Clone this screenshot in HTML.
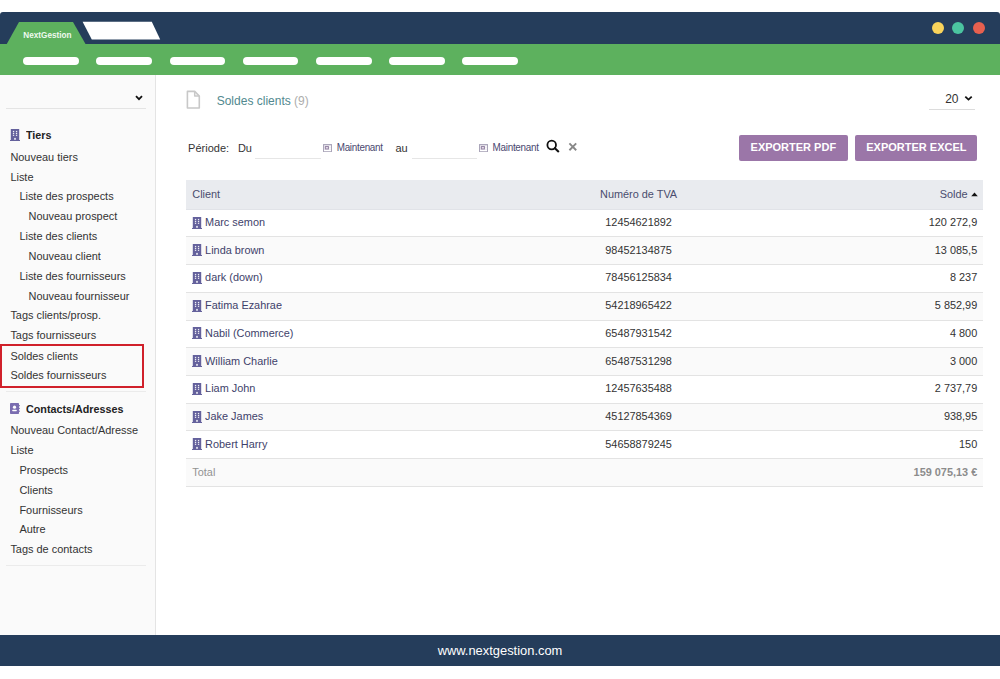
<!DOCTYPE html>
<html><head><meta charset="utf-8">
<style>
*{box-sizing:border-box;margin:0;padding:0}
html,body{width:1000px;height:679px;overflow:hidden;background:#fff}
body{position:relative;font-family:"Liberation Sans",sans-serif;color:#333;font-size:10.8px}
.abs{position:absolute}
.pill{position:absolute;top:56.5px;height:8px;width:55.5px;border-radius:4px;background:#fff}
.dot{position:absolute;top:21.5px;width:12px;height:12px;border-radius:50%}
.btn{position:absolute;top:134.7px;height:26px;background:#9b76a8;border-radius:2px;color:#fff;font-weight:bold;font-size:11px;text-align:center;line-height:24.5px}
</style></head>
<body>
<div class="abs" style="left:0;top:12px;width:1000px;height:32px;background:#253d5b;border-radius:3px 3px 0 0"></div>
<svg class="abs" style="left:0;top:0" width="200" height="50"><polygon points="6.5,44.5 19,22 73,22 85.8,44.5" fill="#5db15e"/><polygon points="82.6,21.8 151.8,21.8 160.2,39.4 91.8,39.4" fill="#fff"/></svg>
<div class="abs" style="left:23.3px;top:29.6px;font-size:8.2px;font-weight:bold;color:#eefaee;line-height:11px;white-space:nowrap">NextGestion</div>
<div class="dot" style="left:932px;background:#f9d35b"></div>
<div class="dot" style="left:952px;background:#4bc4a0"></div>
<div class="dot" style="left:973px;background:#e8604f"></div>
<div class="abs" style="left:0;top:43.5px;width:1000px;height:31.5px;background:#5db15e"></div>
<div class="pill" style="left:23.0px"></div>
<div class="pill" style="left:96.2px"></div>
<div class="pill" style="left:169.6px"></div>
<div class="pill" style="left:242.8px"></div>
<div class="pill" style="left:316.0px"></div>
<div class="pill" style="left:389.2px"></div>
<div class="pill" style="left:462.4px"></div>
<div class="abs" style="left:0;top:75px;width:156px;height:560px;background:#fafafa;border-right:1px solid #e4e4e4"></div>
<div class="abs" style="left:26.00px;top:127.98px;font-size:10.75px;line-height:14px;color:#222;white-space:nowrap;transform:scaleY(1.060);transform-origin:0 10.72px;font-weight:bold">Tiers</div>
<div class="abs" style="left:10.40px;top:150.21px;font-size:10.95px;line-height:14px;color:#333;white-space:nowrap;transform:scaleY(1.060);transform-origin:0 10.79px;">Nouveau tiers</div>
<div class="abs" style="left:10.40px;top:169.51px;font-size:10.95px;line-height:14px;color:#333;white-space:nowrap;transform:scaleY(1.060);transform-origin:0 10.79px;">Liste</div>
<div class="abs" style="left:19.40px;top:189.41px;font-size:10.95px;line-height:14px;color:#333;white-space:nowrap;transform:scaleY(1.060);transform-origin:0 10.79px;">Liste des prospects</div>
<div class="abs" style="left:28.50px;top:209.21px;font-size:10.95px;line-height:14px;color:#333;white-space:nowrap;transform:scaleY(1.060);transform-origin:0 10.79px;">Nouveau prospect</div>
<div class="abs" style="left:19.40px;top:229.21px;font-size:10.95px;line-height:14px;color:#333;white-space:nowrap;transform:scaleY(1.060);transform-origin:0 10.79px;">Liste des clients</div>
<div class="abs" style="left:28.50px;top:249.21px;font-size:10.95px;line-height:14px;color:#333;white-space:nowrap;transform:scaleY(1.060);transform-origin:0 10.79px;">Nouveau client</div>
<div class="abs" style="left:19.40px;top:269.11px;font-size:10.95px;line-height:14px;color:#333;white-space:nowrap;transform:scaleY(1.060);transform-origin:0 10.79px;">Liste des fournisseurs</div>
<div class="abs" style="left:28.50px;top:288.91px;font-size:10.95px;line-height:14px;color:#333;white-space:nowrap;transform:scaleY(1.060);transform-origin:0 10.79px;">Nouveau fournisseur</div>
<div class="abs" style="left:10.40px;top:308.21px;font-size:10.95px;line-height:14px;color:#333;white-space:nowrap;transform:scaleY(1.060);transform-origin:0 10.79px;">Tags clients/prosp.</div>
<div class="abs" style="left:10.40px;top:328.41px;font-size:10.95px;line-height:14px;color:#333;white-space:nowrap;transform:scaleY(1.060);transform-origin:0 10.79px;">Tags fournisseurs</div>
<div class="abs" style="left:10.40px;top:348.91px;font-size:10.95px;line-height:14px;color:#333;white-space:nowrap;transform:scaleY(1.060);transform-origin:0 10.79px;">Soldes clients</div>
<div class="abs" style="left:10.40px;top:368.31px;font-size:10.95px;line-height:14px;color:#333;white-space:nowrap;transform:scaleY(1.060);transform-origin:0 10.79px;">Soldes fournisseurs</div>
<div class="abs" style="left:26.00px;top:401.58px;font-size:10.75px;line-height:14px;color:#222;white-space:nowrap;transform:scaleY(1.060);transform-origin:0 10.72px;font-weight:bold">Contacts/Adresses</div>
<div class="abs" style="left:10.40px;top:422.81px;font-size:10.95px;line-height:14px;color:#333;white-space:nowrap;transform:scaleY(1.060);transform-origin:0 10.79px;">Nouveau Contact/Adresse</div>
<div class="abs" style="left:10.40px;top:442.71px;font-size:10.95px;line-height:14px;color:#333;white-space:nowrap;transform:scaleY(1.060);transform-origin:0 10.79px;">Liste</div>
<div class="abs" style="left:19.40px;top:463.01px;font-size:10.95px;line-height:14px;color:#333;white-space:nowrap;transform:scaleY(1.060);transform-origin:0 10.79px;">Prospects</div>
<div class="abs" style="left:19.40px;top:482.91px;font-size:10.95px;line-height:14px;color:#333;white-space:nowrap;transform:scaleY(1.060);transform-origin:0 10.79px;">Clients</div>
<div class="abs" style="left:19.40px;top:502.81px;font-size:10.95px;line-height:14px;color:#333;white-space:nowrap;transform:scaleY(1.060);transform-origin:0 10.79px;">Fournisseurs</div>
<div class="abs" style="left:19.40px;top:522.31px;font-size:10.95px;line-height:14px;color:#333;white-space:nowrap;transform:scaleY(1.060);transform-origin:0 10.79px;">Autre</div>
<div class="abs" style="left:10.40px;top:542.11px;font-size:10.95px;line-height:14px;color:#333;white-space:nowrap;transform:scaleY(1.060);transform-origin:0 10.79px;">Tags de contacts</div>
<div class="abs" style="left:10px;top:128.9px;width:10px;height:12px"><svg width="10" height="12" viewBox="0 0 10 12" style="position:absolute;left:0;top:0"><path d="M0.8 0h8.4v11h0.8v1H0v-1h0.8z" fill="#64619c"/><g fill="#fff" opacity=".9"><rect x="2.9" y="1.9" width="1.3" height="1.2"/><rect x="5.9" y="1.9" width="1.3" height="1.2"/><rect x="2.9" y="3.8" width="1.3" height="1.2"/><rect x="5.9" y="3.8" width="1.3" height="1.2"/><rect x="2.9" y="5.7" width="1.3" height="1.2"/><rect x="5.9" y="5.7" width="1.3" height="1.2"/><rect x="4.2" y="8.9" width="1.6" height="1.9"/></g></svg></div>
<div class="abs" style="left:10px;top:403px;width:10px;height:11px"><svg width="10" height="11" viewBox="0 0 10 11" style="position:absolute;left:0;top:0"><rect x="0" y="0" width="9" height="11" rx="0.8" fill="#7a6db0"/><rect x="9" y="2" width="0.8" height="1.3" fill="#7a6db0"/><rect x="9" y="4.8" width="0.8" height="1.3" fill="#7a6db0"/><rect x="9" y="7.6" width="0.8" height="1.3" fill="#7a6db0"/><circle cx="4.5" cy="4.2" r="1.6" fill="#fff"/><rect x="2.2" y="6.7" width="4.6" height="1.5" rx=".6" fill="#fff"/></svg></div>
<div class="abs" style="left:5.5px;top:107.5px;width:140px;height:1px;background:#e4e4e4"></div>
<svg class="abs" style="left:135.4px;top:94.8px" width="8" height="6" viewBox="0 0 8 6"><path d="M1 1.2 L4 4.2 L7 1.2" stroke="#111" stroke-width="1.8" fill="none"/></svg>
<div class="abs" style="left:0;top:344.3px;width:144px;height:43.7px;border:2px solid #d0202a"></div>
<div class="abs" style="left:5.6px;top:391.3px;width:140px;height:1px;background:#ebebeb"></div>
<div class="abs" style="left:6px;top:564.5px;width:140px;height:1px;background:#ebebeb"></div>
<svg class="abs" style="left:185.8px;top:90px" width="16" height="20" viewBox="0 0 16 20"><path d="M1.4 1.4 H8.7 L13.3 6.1 V18 H1.4 Z" fill="none" stroke="#c8c8c8" stroke-width="1.6" stroke-linejoin="round"/><path d="M8.7 1.4 V6.1 H13.3" fill="none" stroke="#c8c8c8" stroke-width="1.5" stroke-linejoin="round"/></svg>
<div class="abs" style="left:216.70px;top:93.54px;font-size:12.00px;line-height:14px;color:#52898f;white-space:nowrap;transform:scaleY(1.060);transform-origin:0 11.16px;">Soldes clients <span style="color:#adadad">(9)</span></div>
<div class="abs" style="left:945.20px;top:91.74px;font-size:12.00px;line-height:14px;color:#333;white-space:nowrap;transform:scaleY(1.060);transform-origin:0 11.16px;transform:scaleY(1.1)">20</div>
<svg class="abs" style="left:964px;top:94.5px" width="9" height="7" viewBox="0 0 9 7"><path d="M1.3 1.6 L4.5 4.6 L7.7 1.6" stroke="#111" stroke-width="1.8" fill="none"/></svg>
<div class="abs" style="left:929px;top:109px;width:46px;height:1px;background:#dcdcdc"></div>
<div class="abs" style="left:188.10px;top:140.59px;font-size:11.00px;line-height:14px;color:#333;white-space:nowrap;transform:scaleY(1.060);transform-origin:0 10.81px;">Période:</div>
<div class="abs" style="left:237.90px;top:140.59px;font-size:11.00px;line-height:14px;color:#333;white-space:nowrap;transform:scaleY(1.060);transform-origin:0 10.81px;">Du</div>
<div class="abs" style="left:255px;top:158px;width:66px;height:1px;background:#e6e6e6"></div>
<svg class="abs" style="left:323.1px;top:143.7px" width="9" height="8.2" viewBox="0 0 9 8.2"><rect x="0.5" y="0.6" width="8" height="7.1" fill="none" stroke="#aaa5b9" stroke-width="1"/><rect x="0.5" y="0.4" width="8" height="0.9" fill="#aaa5b9"/><path d="M1 3.2H8M1 5.2H8" stroke="#ddd8e6" stroke-width=".6"/><rect x="2.3" y="2.6" width="3.1" height="2.4" fill="#efe6f2" stroke="#8f7f9f" stroke-width="1"/></svg>
<div class="abs" style="left:336.70px;top:140.97px;font-size:9.90px;line-height:14px;color:#4a4870;white-space:nowrap;transform:scaleY(1.060);transform-origin:0 10.43px;letter-spacing:-0.28px">Maintenant</div>
<div class="abs" style="left:395.40px;top:140.59px;font-size:11.00px;line-height:14px;color:#333;white-space:nowrap;transform:scaleY(1.060);transform-origin:0 10.81px;">au</div>
<div class="abs" style="left:411.5px;top:158px;width:65.5px;height:1px;background:#e6e6e6"></div>
<svg class="abs" style="left:479.0px;top:143.7px" width="9" height="8.2" viewBox="0 0 9 8.2"><rect x="0.5" y="0.6" width="8" height="7.1" fill="none" stroke="#aaa5b9" stroke-width="1"/><rect x="0.5" y="0.4" width="8" height="0.9" fill="#aaa5b9"/><path d="M1 3.2H8M1 5.2H8" stroke="#ddd8e6" stroke-width=".6"/><rect x="2.3" y="2.6" width="3.1" height="2.4" fill="#efe6f2" stroke="#8f7f9f" stroke-width="1"/></svg>
<div class="abs" style="left:492.60px;top:140.97px;font-size:9.90px;line-height:14px;color:#4a4870;white-space:nowrap;transform:scaleY(1.060);transform-origin:0 10.43px;letter-spacing:-0.28px">Maintenant</div>
<svg class="abs" style="left:544px;top:138px" width="17" height="16" viewBox="0 0 17 16"><circle cx="7.7" cy="7" r="4.3" fill="none" stroke="#111" stroke-width="1.8"/><path d="M10.9 10.2 L14.3 13.4" stroke="#111" stroke-width="2.1" stroke-linecap="round"/></svg>
<svg class="abs" style="left:568px;top:141.5px" width="10" height="10" viewBox="0 0 10 10"><path d="M1.4 1.45 L8.2 8.25 M8.2 1.45 L1.4 8.25" stroke="#888" stroke-width="1.9"/></svg>
<div class="btn" style="left:739px;width:108.7px">EXPORTER PDF</div>
<div class="btn" style="left:855.3px;width:122.2px">EXPORTER EXCEL</div>
<div class="abs" style="left:186px;top:180px;width:797.2px;height:29.6px;background:#e9ebef;border-bottom:1.2px solid #e1e3e8"></div>
<div class="abs" style="left:192.30px;top:187.42px;font-size:10.90px;line-height:14px;color:#4a4d6e;white-space:nowrap;transform:scaleY(1.060);transform-origin:0 10.78px;">Client</div>
<div class="abs" style="left:638.60px;top:187.42px;width:0;font-size:10.90px;line-height:14px;white-space:nowrap;color:#4a4d6e;transform:scaleY(1.060);transform-origin:0 10.78px;"><span style="position:absolute;left:0;transform:translateX(-50%)">Numéro de TVA</span></div>
<div class="abs" style="left:939.70px;top:187.42px;font-size:10.90px;line-height:14px;color:#4a4d6e;white-space:nowrap;transform:scaleY(1.060);transform-origin:0 10.78px;">Solde</div>
<svg class="abs" style="left:970.5px;top:192px" width="7" height="5" viewBox="0 0 7 5"><path d="M0.2 4.2 L3.5 0.6 L6.8 4.2 Z" fill="#111"/></svg>
<div class="abs" style="left:186px;top:209.60px;width:797.2px;height:27.73px;background:#fff;border-bottom:1px solid #e3e3e3"></div>
<div class="abs" style="left:186px;top:237.33px;width:797.2px;height:27.73px;background:#fafafa;border-bottom:1px solid #e3e3e3"></div>
<div class="abs" style="left:186px;top:265.06px;width:797.2px;height:27.73px;background:#fff;border-bottom:1px solid #e3e3e3"></div>
<div class="abs" style="left:186px;top:292.79px;width:797.2px;height:27.73px;background:#fafafa;border-bottom:1px solid #e3e3e3"></div>
<div class="abs" style="left:186px;top:320.52px;width:797.2px;height:27.73px;background:#fff;border-bottom:1px solid #e3e3e3"></div>
<div class="abs" style="left:186px;top:348.25px;width:797.2px;height:27.73px;background:#fafafa;border-bottom:1px solid #e3e3e3"></div>
<div class="abs" style="left:186px;top:375.98px;width:797.2px;height:27.73px;background:#fff;border-bottom:1px solid #e3e3e3"></div>
<div class="abs" style="left:186px;top:403.71px;width:797.2px;height:27.73px;background:#fafafa;border-bottom:1px solid #e3e3e3"></div>
<div class="abs" style="left:186px;top:431.44px;width:797.2px;height:27.73px;background:#fff;border-bottom:1px solid #e3e3e3"></div>
<div class="abs" style="left:186px;top:459.17px;width:797.2px;height:27.73px;background:#fafafa;border-bottom:1px solid #e3e3e3"></div>
<div class="abs" style="left:192px;top:216.50px;width:10px;height:12px"><svg width="10" height="12" viewBox="0 0 10 12" style="position:absolute;left:0;top:0"><path d="M0.8 0h8.4v11h0.8v1H0v-1h0.8z" fill="#64619c"/><g fill="#fff" opacity=".9"><rect x="2.9" y="1.9" width="1.3" height="1.2"/><rect x="5.9" y="1.9" width="1.3" height="1.2"/><rect x="2.9" y="3.8" width="1.3" height="1.2"/><rect x="5.9" y="3.8" width="1.3" height="1.2"/><rect x="2.9" y="5.7" width="1.3" height="1.2"/><rect x="5.9" y="5.7" width="1.3" height="1.2"/><rect x="4.2" y="8.9" width="1.6" height="1.9"/></g></svg></div>
<div class="abs" style="left:205.10px;top:214.92px;font-size:10.90px;line-height:14px;color:#3e3f6a;white-space:nowrap;transform:scaleY(1.060);transform-origin:0 10.78px;">Marc semon</div>
<div class="abs" style="left:638.60px;top:214.92px;width:0;font-size:10.90px;line-height:14px;white-space:nowrap;color:#333;transform:scaleY(1.060);transform-origin:0 10.78px;"><span style="position:absolute;left:0;transform:translateX(-50%)">12454621892</span></div>
<div class="abs" style="right:22.80px;top:214.92px;font-size:10.90px;line-height:14px;white-space:nowrap;color:#333;text-align:right;transform:scaleY(1.060);transform-origin:0 10.78px;">120 272,9</div>
<div class="abs" style="left:192px;top:244.23px;width:10px;height:12px"><svg width="10" height="12" viewBox="0 0 10 12" style="position:absolute;left:0;top:0"><path d="M0.8 0h8.4v11h0.8v1H0v-1h0.8z" fill="#64619c"/><g fill="#fff" opacity=".9"><rect x="2.9" y="1.9" width="1.3" height="1.2"/><rect x="5.9" y="1.9" width="1.3" height="1.2"/><rect x="2.9" y="3.8" width="1.3" height="1.2"/><rect x="5.9" y="3.8" width="1.3" height="1.2"/><rect x="2.9" y="5.7" width="1.3" height="1.2"/><rect x="5.9" y="5.7" width="1.3" height="1.2"/><rect x="4.2" y="8.9" width="1.6" height="1.9"/></g></svg></div>
<div class="abs" style="left:205.10px;top:242.65px;font-size:10.90px;line-height:14px;color:#3e3f6a;white-space:nowrap;transform:scaleY(1.060);transform-origin:0 10.78px;">Linda brown</div>
<div class="abs" style="left:638.60px;top:242.65px;width:0;font-size:10.90px;line-height:14px;white-space:nowrap;color:#333;transform:scaleY(1.060);transform-origin:0 10.78px;"><span style="position:absolute;left:0;transform:translateX(-50%)">98452134875</span></div>
<div class="abs" style="right:22.80px;top:242.65px;font-size:10.90px;line-height:14px;white-space:nowrap;color:#333;text-align:right;transform:scaleY(1.060);transform-origin:0 10.78px;">13 085,5</div>
<div class="abs" style="left:192px;top:271.96px;width:10px;height:12px"><svg width="10" height="12" viewBox="0 0 10 12" style="position:absolute;left:0;top:0"><path d="M0.8 0h8.4v11h0.8v1H0v-1h0.8z" fill="#64619c"/><g fill="#fff" opacity=".9"><rect x="2.9" y="1.9" width="1.3" height="1.2"/><rect x="5.9" y="1.9" width="1.3" height="1.2"/><rect x="2.9" y="3.8" width="1.3" height="1.2"/><rect x="5.9" y="3.8" width="1.3" height="1.2"/><rect x="2.9" y="5.7" width="1.3" height="1.2"/><rect x="5.9" y="5.7" width="1.3" height="1.2"/><rect x="4.2" y="8.9" width="1.6" height="1.9"/></g></svg></div>
<div class="abs" style="left:205.10px;top:270.38px;font-size:10.90px;line-height:14px;color:#3e3f6a;white-space:nowrap;transform:scaleY(1.060);transform-origin:0 10.78px;">dark (down)</div>
<div class="abs" style="left:638.60px;top:270.38px;width:0;font-size:10.90px;line-height:14px;white-space:nowrap;color:#333;transform:scaleY(1.060);transform-origin:0 10.78px;"><span style="position:absolute;left:0;transform:translateX(-50%)">78456125834</span></div>
<div class="abs" style="right:22.80px;top:270.38px;font-size:10.90px;line-height:14px;white-space:nowrap;color:#333;text-align:right;transform:scaleY(1.060);transform-origin:0 10.78px;">8 237</div>
<div class="abs" style="left:192px;top:299.69px;width:10px;height:12px"><svg width="10" height="12" viewBox="0 0 10 12" style="position:absolute;left:0;top:0"><path d="M0.8 0h8.4v11h0.8v1H0v-1h0.8z" fill="#64619c"/><g fill="#fff" opacity=".9"><rect x="2.9" y="1.9" width="1.3" height="1.2"/><rect x="5.9" y="1.9" width="1.3" height="1.2"/><rect x="2.9" y="3.8" width="1.3" height="1.2"/><rect x="5.9" y="3.8" width="1.3" height="1.2"/><rect x="2.9" y="5.7" width="1.3" height="1.2"/><rect x="5.9" y="5.7" width="1.3" height="1.2"/><rect x="4.2" y="8.9" width="1.6" height="1.9"/></g></svg></div>
<div class="abs" style="left:205.10px;top:298.11px;font-size:10.90px;line-height:14px;color:#3e3f6a;white-space:nowrap;transform:scaleY(1.060);transform-origin:0 10.78px;">Fatima Ezahrae</div>
<div class="abs" style="left:638.60px;top:298.11px;width:0;font-size:10.90px;line-height:14px;white-space:nowrap;color:#333;transform:scaleY(1.060);transform-origin:0 10.78px;"><span style="position:absolute;left:0;transform:translateX(-50%)">54218965422</span></div>
<div class="abs" style="right:22.80px;top:298.11px;font-size:10.90px;line-height:14px;white-space:nowrap;color:#333;text-align:right;transform:scaleY(1.060);transform-origin:0 10.78px;">5 852,99</div>
<div class="abs" style="left:192px;top:327.42px;width:10px;height:12px"><svg width="10" height="12" viewBox="0 0 10 12" style="position:absolute;left:0;top:0"><path d="M0.8 0h8.4v11h0.8v1H0v-1h0.8z" fill="#64619c"/><g fill="#fff" opacity=".9"><rect x="2.9" y="1.9" width="1.3" height="1.2"/><rect x="5.9" y="1.9" width="1.3" height="1.2"/><rect x="2.9" y="3.8" width="1.3" height="1.2"/><rect x="5.9" y="3.8" width="1.3" height="1.2"/><rect x="2.9" y="5.7" width="1.3" height="1.2"/><rect x="5.9" y="5.7" width="1.3" height="1.2"/><rect x="4.2" y="8.9" width="1.6" height="1.9"/></g></svg></div>
<div class="abs" style="left:205.10px;top:325.84px;font-size:10.90px;line-height:14px;color:#3e3f6a;white-space:nowrap;transform:scaleY(1.060);transform-origin:0 10.78px;">Nabil (Commerce)</div>
<div class="abs" style="left:638.60px;top:325.84px;width:0;font-size:10.90px;line-height:14px;white-space:nowrap;color:#333;transform:scaleY(1.060);transform-origin:0 10.78px;"><span style="position:absolute;left:0;transform:translateX(-50%)">65487931542</span></div>
<div class="abs" style="right:22.80px;top:325.84px;font-size:10.90px;line-height:14px;white-space:nowrap;color:#333;text-align:right;transform:scaleY(1.060);transform-origin:0 10.78px;">4 800</div>
<div class="abs" style="left:192px;top:355.15px;width:10px;height:12px"><svg width="10" height="12" viewBox="0 0 10 12" style="position:absolute;left:0;top:0"><path d="M0.8 0h8.4v11h0.8v1H0v-1h0.8z" fill="#64619c"/><g fill="#fff" opacity=".9"><rect x="2.9" y="1.9" width="1.3" height="1.2"/><rect x="5.9" y="1.9" width="1.3" height="1.2"/><rect x="2.9" y="3.8" width="1.3" height="1.2"/><rect x="5.9" y="3.8" width="1.3" height="1.2"/><rect x="2.9" y="5.7" width="1.3" height="1.2"/><rect x="5.9" y="5.7" width="1.3" height="1.2"/><rect x="4.2" y="8.9" width="1.6" height="1.9"/></g></svg></div>
<div class="abs" style="left:205.10px;top:353.57px;font-size:10.90px;line-height:14px;color:#3e3f6a;white-space:nowrap;transform:scaleY(1.060);transform-origin:0 10.78px;">William Charlie</div>
<div class="abs" style="left:638.60px;top:353.57px;width:0;font-size:10.90px;line-height:14px;white-space:nowrap;color:#333;transform:scaleY(1.060);transform-origin:0 10.78px;"><span style="position:absolute;left:0;transform:translateX(-50%)">65487531298</span></div>
<div class="abs" style="right:22.80px;top:353.57px;font-size:10.90px;line-height:14px;white-space:nowrap;color:#333;text-align:right;transform:scaleY(1.060);transform-origin:0 10.78px;">3 000</div>
<div class="abs" style="left:192px;top:382.88px;width:10px;height:12px"><svg width="10" height="12" viewBox="0 0 10 12" style="position:absolute;left:0;top:0"><path d="M0.8 0h8.4v11h0.8v1H0v-1h0.8z" fill="#64619c"/><g fill="#fff" opacity=".9"><rect x="2.9" y="1.9" width="1.3" height="1.2"/><rect x="5.9" y="1.9" width="1.3" height="1.2"/><rect x="2.9" y="3.8" width="1.3" height="1.2"/><rect x="5.9" y="3.8" width="1.3" height="1.2"/><rect x="2.9" y="5.7" width="1.3" height="1.2"/><rect x="5.9" y="5.7" width="1.3" height="1.2"/><rect x="4.2" y="8.9" width="1.6" height="1.9"/></g></svg></div>
<div class="abs" style="left:205.10px;top:381.30px;font-size:10.90px;line-height:14px;color:#3e3f6a;white-space:nowrap;transform:scaleY(1.060);transform-origin:0 10.78px;">Liam John</div>
<div class="abs" style="left:638.60px;top:381.30px;width:0;font-size:10.90px;line-height:14px;white-space:nowrap;color:#333;transform:scaleY(1.060);transform-origin:0 10.78px;"><span style="position:absolute;left:0;transform:translateX(-50%)">12457635488</span></div>
<div class="abs" style="right:22.80px;top:381.30px;font-size:10.90px;line-height:14px;white-space:nowrap;color:#333;text-align:right;transform:scaleY(1.060);transform-origin:0 10.78px;">2 737,79</div>
<div class="abs" style="left:192px;top:410.61px;width:10px;height:12px"><svg width="10" height="12" viewBox="0 0 10 12" style="position:absolute;left:0;top:0"><path d="M0.8 0h8.4v11h0.8v1H0v-1h0.8z" fill="#64619c"/><g fill="#fff" opacity=".9"><rect x="2.9" y="1.9" width="1.3" height="1.2"/><rect x="5.9" y="1.9" width="1.3" height="1.2"/><rect x="2.9" y="3.8" width="1.3" height="1.2"/><rect x="5.9" y="3.8" width="1.3" height="1.2"/><rect x="2.9" y="5.7" width="1.3" height="1.2"/><rect x="5.9" y="5.7" width="1.3" height="1.2"/><rect x="4.2" y="8.9" width="1.6" height="1.9"/></g></svg></div>
<div class="abs" style="left:205.10px;top:409.03px;font-size:10.90px;line-height:14px;color:#3e3f6a;white-space:nowrap;transform:scaleY(1.060);transform-origin:0 10.78px;">Jake James</div>
<div class="abs" style="left:638.60px;top:409.03px;width:0;font-size:10.90px;line-height:14px;white-space:nowrap;color:#333;transform:scaleY(1.060);transform-origin:0 10.78px;"><span style="position:absolute;left:0;transform:translateX(-50%)">45127854369</span></div>
<div class="abs" style="right:22.80px;top:409.03px;font-size:10.90px;line-height:14px;white-space:nowrap;color:#333;text-align:right;transform:scaleY(1.060);transform-origin:0 10.78px;">938,95</div>
<div class="abs" style="left:192px;top:438.34px;width:10px;height:12px"><svg width="10" height="12" viewBox="0 0 10 12" style="position:absolute;left:0;top:0"><path d="M0.8 0h8.4v11h0.8v1H0v-1h0.8z" fill="#64619c"/><g fill="#fff" opacity=".9"><rect x="2.9" y="1.9" width="1.3" height="1.2"/><rect x="5.9" y="1.9" width="1.3" height="1.2"/><rect x="2.9" y="3.8" width="1.3" height="1.2"/><rect x="5.9" y="3.8" width="1.3" height="1.2"/><rect x="2.9" y="5.7" width="1.3" height="1.2"/><rect x="5.9" y="5.7" width="1.3" height="1.2"/><rect x="4.2" y="8.9" width="1.6" height="1.9"/></g></svg></div>
<div class="abs" style="left:205.10px;top:436.76px;font-size:10.90px;line-height:14px;color:#3e3f6a;white-space:nowrap;transform:scaleY(1.060);transform-origin:0 10.78px;">Robert Harry</div>
<div class="abs" style="left:638.60px;top:436.76px;width:0;font-size:10.90px;line-height:14px;white-space:nowrap;color:#333;transform:scaleY(1.060);transform-origin:0 10.78px;"><span style="position:absolute;left:0;transform:translateX(-50%)">54658879245</span></div>
<div class="abs" style="right:22.80px;top:436.76px;font-size:10.90px;line-height:14px;white-space:nowrap;color:#333;text-align:right;transform:scaleY(1.060);transform-origin:0 10.78px;">150</div>
<div class="abs" style="left:192.30px;top:464.99px;font-size:10.90px;line-height:14px;color:#929292;white-space:nowrap;transform:scaleY(1.060);transform-origin:0 10.78px;">Total</div>
<div class="abs" style="right:22.80px;top:464.99px;font-size:10.90px;line-height:14px;white-space:nowrap;color:#8c8c8c;text-align:right;transform:scaleY(1.060);transform-origin:0 10.78px;font-weight:bold">159 075,13 €</div>
<div class="abs" style="left:0;top:635px;width:1000px;height:31px;background:#253d5b;color:#fff;font-size:12.9px;text-align:center;line-height:32px">www.nextgestion.com</div>
</body></html>
